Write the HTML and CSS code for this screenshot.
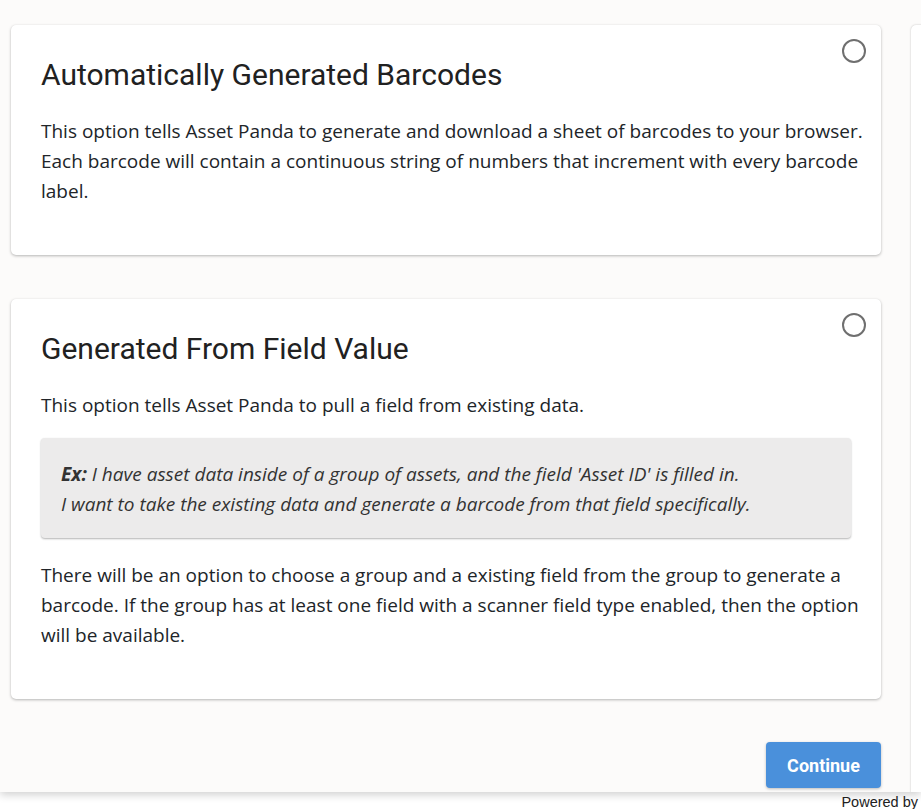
FILE: index.html
```html
<!DOCTYPE html>
<html lang="en">
<head>
<meta charset="utf-8">
<title>Barcode options</title>
<link rel="stylesheet" href="styles.css">
</head>
<body>
<div class="stage">
  <div class="column">
    <section class="card card-auto">
      <span class="radio"></span>
      <h2 class="card-title">Automatically Generated Barcodes</h2>
      <p class="card-text">This option tells Asset Panda to generate and download a sheet of barcodes to your browser. Each barcode will contain a continuous string of numbers that increment with every barcode label.</p>
    </section>
    <section class="card card-field">
      <span class="radio"></span>
      <h2 class="card-title">Generated From Field Value</h2>
      <p class="card-text">This option tells Asset Panda to pull a field from existing data.</p>
      <div class="example">
        <p><b>Ex:</b> I have asset data inside of a group of assets, and the field 'Asset ID' is filled in.<br>I want to take the existing data and generate a barcode from that field specifically.</p>
      </div>
      <p class="card-text">There will be an option to choose a group and a existing field from the group to generate a barcode. If the group has at least one field with a scanner field type enabled, then the option will be available.</p>
    </section>
    <div class="actions">
      <button class="btn-continue" type="button">Continue</button>
    </div>
  </div>
  <div class="next-column"></div>
</div>
<footer class="footer">Powered by</footer>
</body>
</html>
```

FILE: styles.css
```css
html, body {
  margin: 0;
  padding: 0;
  background: #ffffff;
}
body {
  width: 921px;
  height: 809px;
  overflow: hidden;
  font-family: "Open Sans", "Noto Sans", sans-serif;
  color: #212529;
}
.stage {
  height: 792px;
  box-sizing: border-box;
  background: #fcfbfa;
  box-shadow: 0 3px 8px rgba(0, 0, 0, 0.18);
  display: flex;
  gap: 30px;
  padding: 25px 0 0 11px;
  overflow: hidden;
  position: relative;
}
.column {
  width: 870px;
  flex: none;
  display: flex;
  flex-direction: column;
  gap: 44px;
}
.card {
  position: relative;
  background: #ffffff;
  border-radius: 5px;
  box-shadow: 0 1px 3px rgba(0, 0, 0, 0.28), 0 0 1px rgba(0, 0, 0, 0.06);
  padding: 30px 14px 0 30px;
  box-sizing: border-box;
}
.card-auto {
  height: 230px;
}
.card-field {
  height: 400px;
}
.radio {
  position: absolute;
  top: 14px;
  right: 15px;
  width: 20px;
  height: 20px;
  border: 2px solid #6f6f6f;
  border-radius: 50%;
}
.card-title {
  margin: 0;
  font-family: Roboto, "Liberation Sans", sans-serif;
  font-weight: 400;
  font-size: 30px;
  line-height: 40px;
  color: #212121;
}
.card-text {
  margin: 21px 0 0 0;
  font-size: 19px;
  line-height: 30px;
}
.example {
  margin-top: 18px;
  width: 810px;
  height: 100px;
  box-sizing: border-box;
  background: #ecebeb;
  border-radius: 4px;
  box-shadow: 0 1px 2px rgba(0, 0, 0, 0.3);
  padding: 21px 20px 0 20px;
}
.example p {
  margin: 0;
  font-style: italic;
  font-size: 19px;
  line-height: 30px;
  color: #333333;
}
.example b {
  font-weight: 700;
}
.card-field .example + .card-text {
  margin-top: 22px;
}
.actions {
  display: flex;
  justify-content: flex-end;
  margin-top: -1px;
}
.btn-continue {
  width: 115px;
  height: 46px;
  border: none;
  border-radius: 4px;
  background: #4a90db;
  color: #ffffff;
  font-family: Roboto, "Liberation Sans", sans-serif;
  font-weight: 700;
  font-size: 18px;
  box-shadow: 0 1px 3px rgba(0, 0, 0, 0.25);
  cursor: pointer;
}
.next-column {
  width: 300px;
  flex: none;
  height: 780px;
  background: #ffffff;
  border-radius: 5px;
  box-shadow: 0 0 2px rgba(0, 0, 0, 0.25);
}
.footer {
  height: 17px;
  text-align: right;
  padding-right: 3px;
  font-family: "Liberation Sans", Arial, sans-serif;
  font-size: 14.5px;
  line-height: 20px;
  color: #222222;
}
```
